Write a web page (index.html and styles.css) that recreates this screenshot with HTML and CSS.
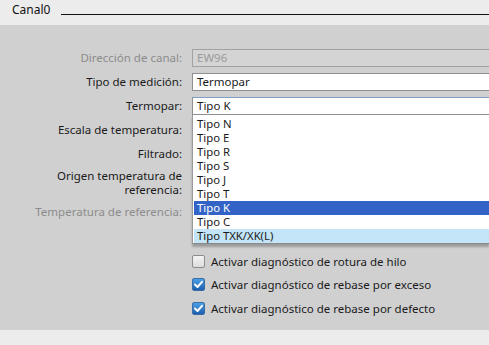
FILE: index.html
```html
<!DOCTYPE html>
<html lang="es">
<head>
<meta charset="utf-8">
<link rel="stylesheet" href="styles.css">
</head>
<body>
<div class="header">
  <span class="title">Canal0</span>
  <span class="rule"></span>
</div>
<div class="panel">
  <div class="form">
    <div class="label disabled">Dirección de canal:</div>
    <div class="field"><div class="input input-disabled">EW96</div></div>

    <div class="label">Tipo de medición:</div>
    <div class="field"><div class="input">Termopar</div></div>

    <div class="label">Termopar:</div>
    <div class="field">
      <div class="input input-focus">Tipo K</div>
      <ul class="dropdown">
        <li>Tipo N</li>
        <li>Tipo E</li>
        <li>Tipo R</li>
        <li>Tipo S</li>
        <li>Tipo J</li>
        <li>Tipo T</li>
        <li class="selected">Tipo K</li>
        <li>Tipo C</li>
        <li class="hover">Tipo TXK/XK(L)</li>
      </ul>
    </div>

    <div class="label">Escala de temperatura:</div>
    <div class="field"><div class="input"></div></div>

    <div class="label">Filtrado:</div>
    <div class="field"><div class="input"></div></div>

    <div class="label tall">Origen temperatura de<br>referencia:</div>
    <div class="field"><div class="input"></div></div>

    <div class="label disabled">Temperatura de referencia:</div>
    <div class="field"><div class="input input-disabled"></div></div>
  </div>

  <div class="checks">
    <div class="check"><span class="box"></span><span>Activar diagnóstico de rotura de hilo</span></div>
    <div class="check"><span class="box on"><svg viewBox="0 0 13 13" width="13" height="13"><path d="M3 6.5 L5.5 9 L10 3.8" fill="none" stroke="#fff" stroke-width="2" stroke-linecap="round" stroke-linejoin="round"/></svg></span><span>Activar diagnóstico de rebase por exceso</span></div>
    <div class="check"><span class="box on"><svg viewBox="0 0 13 13" width="13" height="13"><path d="M3 6.5 L5.5 9 L10 3.8" fill="none" stroke="#fff" stroke-width="2" stroke-linecap="round" stroke-linejoin="round"/></svg></span><span>Activar diagnóstico de rebase por defecto</span></div>
  </div>
</div>
<div class="footer"></div>
</body>
</html>
```
FILE: styles.css
```css
html, body {
  margin: 0;
  padding: 0;
  width: 489px;
  height: 345px;
  overflow: hidden;
  background: #ececec;
  font-family: "Noto Sans", "Open Sans", sans-serif;
  font-size: 11.5px;
  color: #1a1a1a;
}

.header {
  height: 25px;
  display: flex;
  align-items: center;
  padding-left: 12px;
  background: #ececec;
}

.title {
  font-size: 12px;
  color: #111;
  position: relative;
  top: -3px;
}

.rule {
  flex: 1;
  height: 0;
  border-top: 1px solid #111;
  margin-left: 11px;
  position: relative;
  top: 2px;
}

.panel {
  height: 305px;
  box-sizing: border-box;
  background: #d0d0d0;
  padding-top: 24px;
}

.form {
  display: grid;
  grid-template-columns: 182px 1fr;
  grid-template-rows: 18px 18px 18px 18px 18px 28px 18px;
  column-gap: 10px;
  row-gap: 6px;
}

.label {
  text-align: right;
  line-height: 18px;
  white-space: nowrap;
}

.label.tall {
  line-height: 14px;
}

.disabled {
  color: #8c8c8c;
}

.field {
  position: relative;
}

.input {
  height: 18px;
  box-sizing: border-box;
  border: 1px solid #8f8f8f;
  border-right: none;
  background: #fff;
  padding-left: 4px;
  line-height: 16px;
}

.input-disabled {
  background: #d4d4d4;
  border-color: #a2a2a2;
  color: #9a9a9a;
}

.input-focus {
  border-top-color: #7e9ec4;
}

.dropdown {
  position: absolute;
  top: 18px;
  left: 0;
  right: 0;
  margin: 0;
  padding: 2px 0 0 1px;
  list-style: none;
  background: #fff;
  border-left: 1px solid #9a9a9a;
  border-bottom: 1px solid #8a8a8a;
  box-shadow: 0 3px 2px rgba(0, 0, 0, 0.25);
  z-index: 5;
  font-size: 11.3px;
}

.dropdown li {
  height: 14px;
  line-height: 14px;
  padding-left: 3px;
}

.dropdown li.selected {
  background: #3363c6;
  color: #fff;
}

.dropdown li.hover {
  background: #c3e5f7;
}

.checks {
  margin: 31px 0 0 192px;
  display: flex;
  flex-direction: column;
  gap: 5.5px;
}

.check {
  display: flex;
  align-items: center;
  gap: 6px;
  height: 18px;
}

.box {
  width: 13px;
  height: 13px;
  box-sizing: border-box;
  border: 1px solid #8d8d8d;
  border-radius: 2px;
  background: linear-gradient(#f4f4f4, #dcdcdc);
  display: inline-block;
  position: relative;
  flex: none;
}

.box.on {
  border-color: #3b6ea5;
  background: linear-gradient(#4aa0e6, #1d5fb2);
}

.box.on svg {
  position: absolute;
  left: -1px;
  top: -1px;
}

.footer {
  height: 15px;
  background: #ececec;
}
```
